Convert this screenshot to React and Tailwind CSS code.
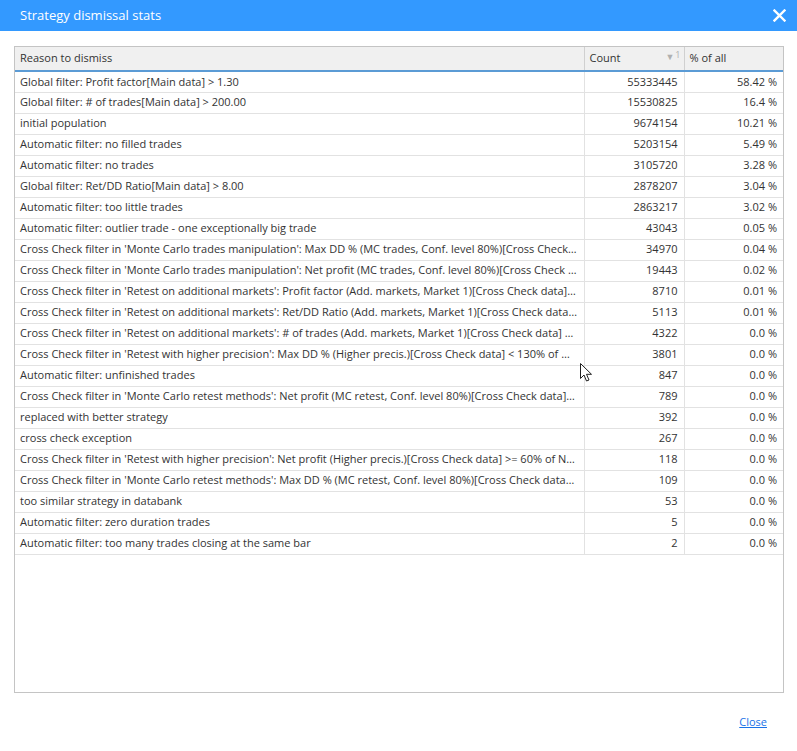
import React from 'react';

const rows = [
  ['Global filter: Profit factor[Main data] > 1.30', '55333445', '58.42 %'],
  ['Global filter: # of trades[Main data] > 200.00', '15530825', '16.4 %'],
  ['initial population', '9674154', '10.21 %'],
  ['Automatic filter: no filled trades', '5203154', '5.49 %'],
  ['Automatic filter: no trades', '3105720', '3.28 %'],
  ['Global filter: Ret/DD Ratio[Main data] > 8.00', '2878207', '3.04 %'],
  ['Automatic filter: too little trades', '2863217', '3.02 %'],
  ['Automatic filter: outlier trade - one exceptionally big trade', '43043', '0.05 %'],
  ["Cross Check filter in 'Monte Carlo trades manipulation': Max DD % (MC trades, Conf. level 80%)[Cross Check data] < 130% of Main data", '34970', '0.04 %'],
  ["Cross Check filter in 'Monte Carlo trades manipulation': Net profit (MC trades, Conf. level 80%)[Cross Check data] >= 60% of Main data", '19443', '0.02 %'],
  ["Cross Check filter in 'Retest on additional markets': Profit factor (Add. markets, Market 1)[Cross Check data] > 1.2", '8710', '0.01 %'],
  ["Cross Check filter in 'Retest on additional markets': Ret/DD Ratio (Add. markets, Market 1)[Cross Check data] > 4", '5113', '0.01 %'],
  ["Cross Check filter in 'Retest on additional markets': # of trades (Add. markets, Market 1)[Cross Check data] > 100", '4322', '0.0 %'],
  ["Cross Check filter in 'Retest with higher precision': Max DD % (Higher precis.)[Cross Check data] < 130% of Main data", '3801', '0.0 %'],
  ['Automatic filter: unfinished trades', '847', '0.0 %'],
  ["Cross Check filter in 'Monte Carlo retest methods': Net profit (MC retest, Conf. level 80%)[Cross Check data] >= 60%", '789', '0.0 %'],
  ['replaced with better strategy', '392', '0.0 %'],
  ['cross check exception', '267', '0.0 %'],
  ["Cross Check filter in 'Retest with higher precision': Net profit (Higher precis.)[Cross Check data] >= 60% of Non-precise data", '118', '0.0 %'],
  ["Cross Check filter in 'Monte Carlo retest methods': Max DD % (MC retest, Conf. level 80%)[Cross Check data] < 130%", '109', '0.0 %'],
  ['too similar strategy in databank', '53', '0.0 %'],
  ['Automatic filter: zero duration trades', '5', '0.0 %'],
  ['Automatic filter: too many trades closing at the same bar', '2', '0.0 %'],
];

export default function App() {
  return (
    <div
      className="relative w-[797px] h-[751px] bg-white flex flex-col text-[#333] text-[11px]"
      style={{ fontFamily: '"Open Sans", "Liberation Sans", sans-serif' }}
    >
      <div className="h-[31px] bg-[#3399ff] flex items-center justify-between pl-5 pr-[10px] text-white">
        <span className="text-[13px]">Strategy dismissal stats</span>
        <svg width="13" height="13" viewBox="0 0 13 13" className="mr-[1px]">
          <path d="M1.5 1.5 L11.5 11.5 M11.5 1.5 L1.5 11.5" stroke="white" strokeWidth="2.4" strokeLinecap="square" />
        </svg>
      </div>

      <div className="px-[14px] pt-[15px]">
        <div className="w-[770px] h-[647px] border border-[#c4c4c4] overflow-hidden">
          <table className="table-fixed border-collapse w-[768px]">
            <colgroup>
              <col className="w-[569px]" />
              <col className="w-[100px]" />
              <col className="w-[99px]" />
            </colgroup>
            <thead>
              <tr className="h-[24px] bg-[#f0f0f0] border-b-2 border-[#5b9bd5]">
                <th className="font-normal text-left pl-[5px] border-r border-[#d0d0d0]">Reason to dismiss</th>
                <th className="font-normal text-left pl-[5px] border-r border-[#d0d0d0]">
                  <div className="flex items-center justify-between pr-[3px]">
                    <span>Count</span>
                    <span className="flex items-start text-[#b0b0b0] -mt-[3px]">
                      <span className="text-[9px] leading-[14px]">▼</span>
                      <span className="text-[9px] leading-[9px] ml-[1px]">1</span>
                    </span>
                  </div>
                </th>
                <th className="font-normal text-left pl-[5px]">% of all</th>
              </tr>
            </thead>
            <tbody>
              {rows.map((r, i) => (
                <tr key={i} className="h-[21px] border-b border-[#e2e2e2]">
                  <td className="pl-[5px] pr-[6px] border-r border-[#e2e2e2] truncate">{r[0]}</td>
                  <td className="pr-[6px] text-right border-r border-[#e2e2e2]">{r[1]}</td>
                  <td className="pr-[6px] text-right">{r[2]}</td>
                </tr>
              ))}
            </tbody>
          </table>
        </div>
      </div>

      <div className="flex justify-end pr-[30px] pt-[21px]">
        <a className="text-[#1a73e8] underline text-[11px] cursor-pointer">Close</a>
      </div>

      <svg className="absolute left-[580px] top-[363px]" width="13" height="20" viewBox="0 0 13 20">
        <path d="M0.5 0.5 L0.5 15.5 L4 12 L6.5 18 L9 17 L6.5 11.3 L11.5 11.3 Z" fill="white" stroke="#222" strokeWidth="1" strokeLinejoin="round" />
      </svg>
    </div>
  );
}
